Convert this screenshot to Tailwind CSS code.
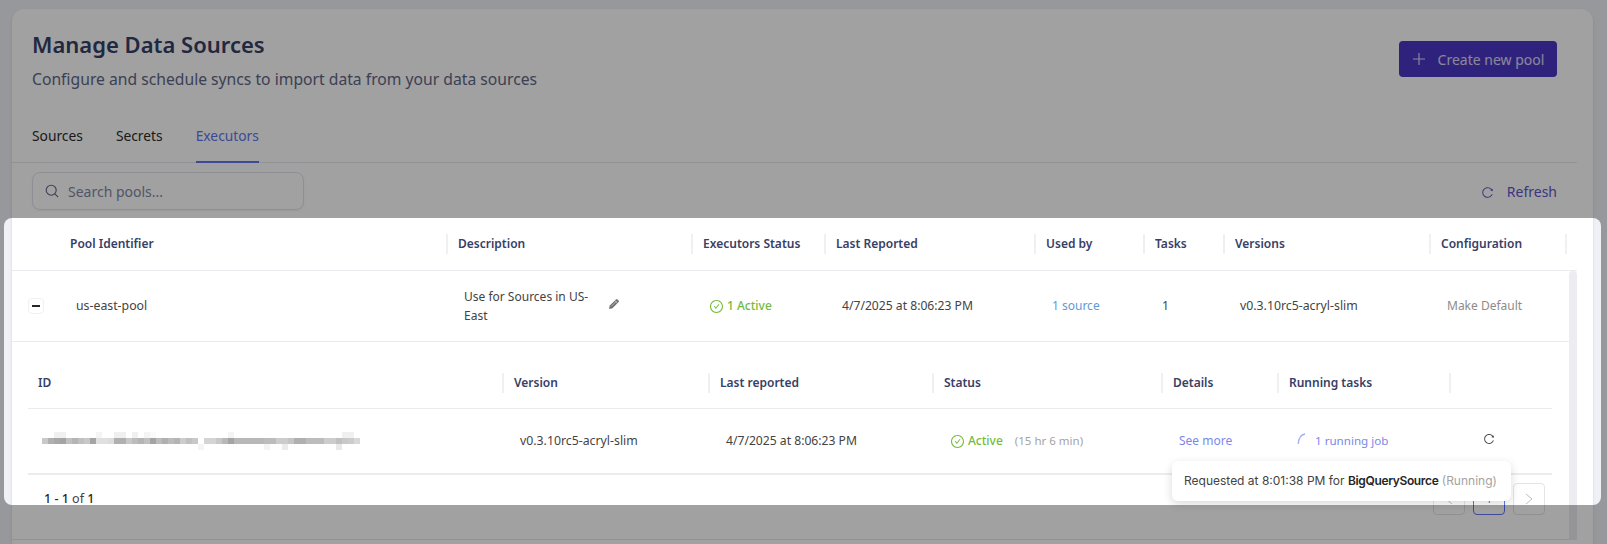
<!DOCTYPE html>
<html lang="en">
<head>
  <meta charset="UTF-8" />
  <title>Manage Data Sources</title>
  <script src="https://cdn.jsdelivr.net/npm/@tailwindcss/browser@4"></script>
</head>
<body class="bg-[#f0f1f6] font-['Noto_Sans',sans-serif] text-[#374066] h-[544px] overflow-hidden">
<div class="relative h-[544px] w-[1607px] overflow-hidden pl-[12px] pt-[9px]">

  <!-- page card -->
  <div class="w-[1581px] h-[600px] bg-white rounded-t-[12px] shadow-sm">
    <div class="flex justify-between items-start pl-[20px] pr-[36px] pt-[20px]">
      <div>
        <h1 class="text-[22px] leading-[32px] -mt-[1px] font-semibold">Manage Data Sources</h1>
        <p class="text-[15.7px] leading-[24px] mt-[7px] text-[#5f6685]">Configure and schedule syncs to import data from your data sources</p>
      </div>
      <button class="mt-[12px] h-[36px] w-[158px] rounded-[4px] bg-[#4b36c4] flex items-center justify-center gap-[12px] text-[14px] text-white/80">
        <svg class="w-[14px] h-[14px]" viewBox="0 0 14 14" fill="none" stroke="currentColor" stroke-width="1.2"><path d="M7 1v12M1 7h12"/></svg>
        Create new pool
      </button>
    </div>

    <div class="flex gap-[33px] mt-[32px] pl-[20px] border-b border-[#e8e8ec] mr-[16px] h-[40px] text-[13.8px] text-[#2c2c2c]">
      <div class="pt-[3px]">Sources</div>
      <div class="pt-[3px]">Secrets</div>
      <div class="pt-[3px] text-[#6075f0] border-b-2 border-[#6075f0] h-[40px]">Executors</div>
    </div>

    <div class="flex justify-between items-center pl-[20px] pr-[36px] mt-[9px]">
      <div class="w-[272px] h-[38px] rounded-[8px] border border-[#e0e2e8] flex items-center gap-[9px] pl-[12px] text-[14px] text-[#8088a3] shadow-xs">
        <svg class="w-[14px] h-[14px]" viewBox="0 0 14 14" fill="none" stroke="#5f6685" stroke-width="1.1"><circle cx="6.2" cy="6.2" r="5"/><path d="M9.8 9.8l3.4 3.4"/></svg>
        Search pools...
      </div>
      <div class="flex items-center gap-[13px] text-[14px] text-[#6254cc]">
        <svg class="w-[13px] h-[13px] mt-[2px]" viewBox="0 0 1024 1024" fill="currentColor"><path d="M909.1 209.3l-56.4 44.1C775.8 155.1 656.2 92 521.9 92 290 92 102.3 279.5 102 511.5 101.7 743.7 289.8 932 521.9 932c181.3 0 335.8-115 394.6-276.1 1.5-4.2-.7-8.9-4.9-10.3l-56.7-19.5a8 8 0 0 0-10.1 4.8c-1.8 5-3.8 10-5.9 14.9-17.3 41-42.1 77.8-73.7 109.4A344.77 344.77 0 0 1 655.9 829c-42.3 17.9-87.4 27-133.8 27-46.5 0-91.5-9.1-133.8-27A341.5 341.5 0 0 1 279 755.2a342.16 342.16 0 0 1-73.7-109.4c-17.9-42.4-27-87.4-27-133.9s9.1-91.5 27-133.9c17.3-41 42.1-77.8 73.7-109.4 31.6-31.6 68.4-56.4 109.3-73.8 42.3-17.9 87.4-27 133.8-27 46.5 0 91.5 9.1 133.8 27a341.5 341.5 0 0 1 109.3 73.8c9.9 9.9 19.2 20.4 27.8 31.4l-60.2 47a8 8 0 0 0 3 14.1l175.6 43c5 1.2 9.9-2.6 9.9-7.7l.8-180.9c-.1-6.6-7.8-10.3-13-6.2z"/></svg>
        Refresh
      </div>
    </div>

    <!-- pools table -->
    <div class="mt-[8px] w-[1565px]">
      <div class="grid grid-cols-[46px_388px_245px_133px_210px_109px_80px_206px_138px] h-[53px] items-center border-b border-[#ececf0] text-[12px] font-semibold">
        <div></div>
        <div class="pl-[12px]">Pool Identifier</div>
        <div class="h-[20px] border-l-2 border-[#f0f0f0] pl-[10px] leading-[20px]">Description</div>
        <div class="h-[20px] border-l-2 border-[#f0f0f0] pl-[10px] leading-[20px]">Executors Status</div>
        <div class="h-[20px] border-l-2 border-[#f0f0f0] pl-[10px] leading-[20px]">Last Reported</div>
        <div class="h-[20px] border-l-2 border-[#f0f0f0] pl-[10px] leading-[20px]">Used by</div>
        <div class="h-[20px] border-l-2 border-[#f0f0f0] pl-[10px] leading-[20px]">Tasks</div>
        <div class="h-[20px] border-l-2 border-[#f0f0f0] pl-[10px] leading-[20px]">Versions</div>
        <div class="h-[20px] border-x-2 border-[#f0f0f0] pl-[10px] leading-[20px]">Configuration</div>
      </div>

      <div class="flex">
        <div class="w-[1557px]">
          <!-- pool row -->
          <div class="grid grid-cols-[47px_388px_245px_133px_210px_109px_80px_206px_129px] h-[71px] items-center border-b border-[#ececf0] text-[12.3px] text-[#434343]">
            <div class="pl-[16px]">
              <div class="w-[16px] h-[16px] rounded-[4px] border border-[#f0f0f0] flex items-center justify-center">
                <div class="w-[8px] h-[1.5px] bg-[#262626]"></div>
              </div>
            </div>
            <div class="pl-[17px]">us-east-pool</div>
            <div class="pl-[17px] flex items-center">
              <div class="w-[133px] leading-[19px] text-[12px]">Use for Sources in US-East</div>
              <svg class="w-[12px] h-[12px] ml-[11px] -mt-[5px]" viewBox="0 0 12 12" fill="#6e6e6e"><path d="M1 11l.8-3.4L8 1.4a1 1 0 0 1 1.4 0l1.2 1.2a1 1 0 0 1 0 1.4L4.4 10.2z"/><path d="M3 8.6L8.8 2.8M7 2.8l2.2 2.2" stroke="#fff" stroke-width=".5" fill="none"/></svg>
            </div>
            <div class="pl-[18px] flex items-center gap-[4px] text-[12px] text-[#73bb3a] font-medium">
              <svg class="w-[13px] h-[13px]" viewBox="64 64 896 896" fill="currentColor"><path d="M699 353h-46.9c-10.2 0-19.9 4.9-25.9 13.3L469 584.3l-71.2-98.8c-6-8.3-15.6-13.3-25.9-13.3H325c-6.5 0-10.3 7.4-6.5 12.7l124.6 172.8a31.8 31.8 0 0 0 51.7 0l210.6-292c3.9-5.3.1-12.7-6.4-12.7z"/><path d="M512 64C264.6 64 64 264.6 64 512s200.6 448 448 448 448-200.6 448-448S759.4 64 512 64zm0 820c-205.4 0-372-166.6-372-372s166.6-372 372-372 372 166.6 372 372-166.6 372-372 372z"/></svg>
              1 Active
            </div>
            <div class="pl-[17px] text-[12.15px]">4/7/2025 at 8:06:23 PM</div>
            <div class="pl-[17px] text-[12px] text-[#5c9bd6]">1 source</div>
            <div class="pl-[18px]">1</div>
            <div class="pl-[16px]">v0.3.10rc5-acryl-slim</div>
            <div class="pl-[17px] text-[12px] text-[#8c8c8c]">Make Default</div>
          </div>

          <!-- executors of the pool -->
          <div class="pt-[16px] pl-[16px] pr-[17px]">
            <div class="grid grid-cols-[474px_206px_224px_229px_116px_172px_103px] h-[51px] items-center border-b border-[#ececf0] text-[12px] font-semibold">
              <div class="pl-[10px]">ID</div>
              <div class="h-[20px] border-l-2 border-[#f0f0f0] pl-[10px] leading-[20px]">Version</div>
              <div class="h-[20px] border-l-2 border-[#f0f0f0] pl-[10px] leading-[20px]">Last reported</div>
              <div class="h-[20px] border-l-2 border-[#f0f0f0] pl-[10px] leading-[20px]">Status</div>
              <div class="h-[20px] border-l-2 border-[#f0f0f0] pl-[10px] leading-[20px]">Details</div>
              <div class="h-[20px] border-l-2 border-[#f0f0f0] pl-[10px] leading-[20px]">Running tasks</div>
              <div class="h-[20px] border-l-2 border-[#f0f0f0]"></div>
            </div>
            <div class="grid grid-cols-[475px_206px_224px_229px_116px_172px_102px] h-[66px] items-center border-b-2 border-[#ececf0] text-[12.3px] text-[#434343]">
              <div class="pl-[14px]"><svg id="maskedId" class="block" width="318" height="18"></svg></div>
              <div class="pl-[17px]">v0.3.10rc5-acryl-slim</div>
              <div class="pl-[17px] text-[12.15px]">4/7/2025 at 8:06:23 PM</div>
              <div class="pl-[18px] flex items-center">
                <svg class="w-[13px] h-[13px] mr-[4px]" viewBox="64 64 896 896" fill="#73bb3a"><path d="M699 353h-46.9c-10.2 0-19.9 4.9-25.9 13.3L469 584.3l-71.2-98.8c-6-8.3-15.6-13.3-25.9-13.3H325c-6.5 0-10.3 7.4-6.5 12.7l124.6 172.8a31.8 31.8 0 0 0 51.7 0l210.6-292c3.9-5.3.1-12.7-6.4-12.7z"/><path d="M512 64C264.6 64 64 264.6 64 512s200.6 448 448 448 448-200.6 448-448S759.4 64 512 64zm0 820c-205.4 0-372-166.6-372-372s166.6-372 372-372 372 166.6 372 372-166.6 372-372 372z"/></svg>
                <span class="text-[12px] text-[#73bb3a] font-medium">Active</span>
                <span class="ml-[12px] text-[#a3a3a3] text-[11.5px]">(15 hr 6 min)</span>
              </div>
              <div class="pl-[17px] text-[12px] text-[#7a88ea]">See more</div>
              <div class="pl-[19px] flex items-center gap-[9px] text-[11.6px] text-[#7a88ea]">
                <svg class="w-[9px] h-[12px] -mt-[4px]" viewBox="0 0 9 12" fill="none" stroke="#a6b0f0" stroke-width="1.3"><path d="M8 1C4 1.6 1.6 4.5 1.2 11"/></svg>
                1 running job
              </div>
              <div class="pl-[33px]">
                <svg class="w-[12px] h-[12px] -mt-[5px]" viewBox="0 0 1024 1024" fill="#434343"><path d="M909.1 209.3l-56.4 44.1C775.8 155.1 656.2 92 521.9 92 290 92 102.3 279.5 102 511.5 101.7 743.7 289.8 932 521.9 932c181.3 0 335.8-115 394.6-276.1 1.5-4.2-.7-8.9-4.9-10.3l-56.7-19.5a8 8 0 0 0-10.1 4.8c-1.8 5-3.8 10-5.9 14.9-17.3 41-42.1 77.8-73.7 109.4A344.77 344.77 0 0 1 655.9 829c-42.3 17.9-87.4 27-133.8 27-46.5 0-91.5-9.1-133.8-27A341.5 341.5 0 0 1 279 755.2a342.16 342.16 0 0 1-73.7-109.4c-17.9-42.4-27-87.4-27-133.9s9.1-91.5 27-133.9c17.3-41 42.1-77.8 73.7-109.4 31.6-31.6 68.4-56.4 109.3-73.8 42.3-17.9 87.4-27 133.8-27 46.5 0 91.5 9.1 133.8 27a341.5 341.5 0 0 1 109.3 73.8c9.9 9.9 19.2 20.4 27.8 31.4l-60.2 47a8 8 0 0 0 3 14.1l175.6 43c5 1.2 9.9-2.6 9.9-7.7l.8-180.9c-.1-6.6-7.8-10.3-13-6.2z"/></svg>
              </div>
            </div>

            <!-- pagination -->
            <div class="flex justify-between items-center h-[32px] mt-[8px] pl-[16px] pr-[7px]">
              <div class="text-[12.5px] font-medium text-[#262626]">1 - 1 <span class="font-normal text-[#434343]">of</span> 1</div>
              <div class="flex gap-[8px] text-[12px]">
                <div class="w-[32px] h-[32px] rounded-[4px] border border-[#e4e4e4] flex items-center justify-center">
                  <svg class="w-[8px] h-[12px]" viewBox="0 0 8 12" fill="none" stroke="#bfbfbf"><path d="M7 1L1 6l6 5"/></svg>
                </div>
                <div class="w-[32px] h-[32px] rounded-[4px] border border-[#6075f0] flex items-center justify-center text-[#6075f0]">1</div>
                <div class="w-[32px] h-[32px] rounded-[4px] border border-[#e4e4e4] flex items-center justify-center">
                  <svg class="w-[8px] h-[12px]" viewBox="0 0 8 12" fill="none" stroke="#bfbfbf"><path d="M1 1l6 5-6 5"/></svg>
                </div>
              </div>
            </div>
            <div class="-ml-[16px] -mr-[17px] mt-[24px] border-t border-[#e8e8ec]"></div>
          </div>
        </div>
        <div class="w-[8px] bg-[#ececf1] rounded-t-[4px]"></div>
      </div>
    </div>
  </div>

  <!-- tour spotlight: dims everything else on the page -->
  <div class="absolute left-[4px] top-[218px] w-[1597px] h-[287px] rounded-[8px] shadow-[0_0_0_2000px_rgba(0,0,0,0.37)] z-10"></div>

  <!-- tooltip -->
  <div class="absolute left-[1172px] top-[461px] w-[339px] h-[40px] bg-white rounded-[6px] shadow-[0_3px_10px_rgba(0,0,0,0.15)] z-20 flex items-center pl-[12px] text-[12px] font-['Inter',sans-serif] text-[#434343] whitespace-nowrap">
    Requested at 8:01:38 PM for&nbsp;<span class="font-semibold tracking-[-0.35px] text-[#262626]">BigQuerySource</span>&nbsp;<span class="text-[#a3a3a3]">(Running)</span>
  </div>
</div>

<script>
  // pixelated (redacted) executor id: grey value of each 6px block
  const mid = ['c8','b0','a8','a4','c0','b4','c0','c8','a4','e0','e0','dc','b0','b0','c8','bc','b4','c0','a4','bc','b0','bc','b4','cc','c0','c8','ff','d4','d4','c8','b8','a4','b8','b8','b8','b8','b8','bc','bc','cc','cc','c4','b0','b0','bc','bc','bc','cc','cc','c0','c8','cc','d8'];
  const top_ = {2:'f0',3:'f0',9:'f4',12:'f0',13:'f0',15:'f0',17:'f4',18:'fa',31:'f4',50:'f0',51:'f0'};
  const bottom = {26:'f4',37:'f4',40:'ec',49:'e8'};
  const svg = document.getElementById('maskedId');
  function block(i, y, v) {
    const r = document.createElementNS('http://www.w3.org/2000/svg', 'rect');
    r.setAttribute('x', i * 6);
    r.setAttribute('y', y);
    r.setAttribute('width', 6);
    r.setAttribute('height', 6);
    r.setAttribute('fill', '#' + v + v + v);
    svg.appendChild(r);
  }
  mid.forEach((v, i) => block(i, 6, v));
  for (const i in top_) block(+i, 0, top_[i]);
  for (const i in bottom) block(+i, 12, bottom[i]);
</script>
</body>
</html>
